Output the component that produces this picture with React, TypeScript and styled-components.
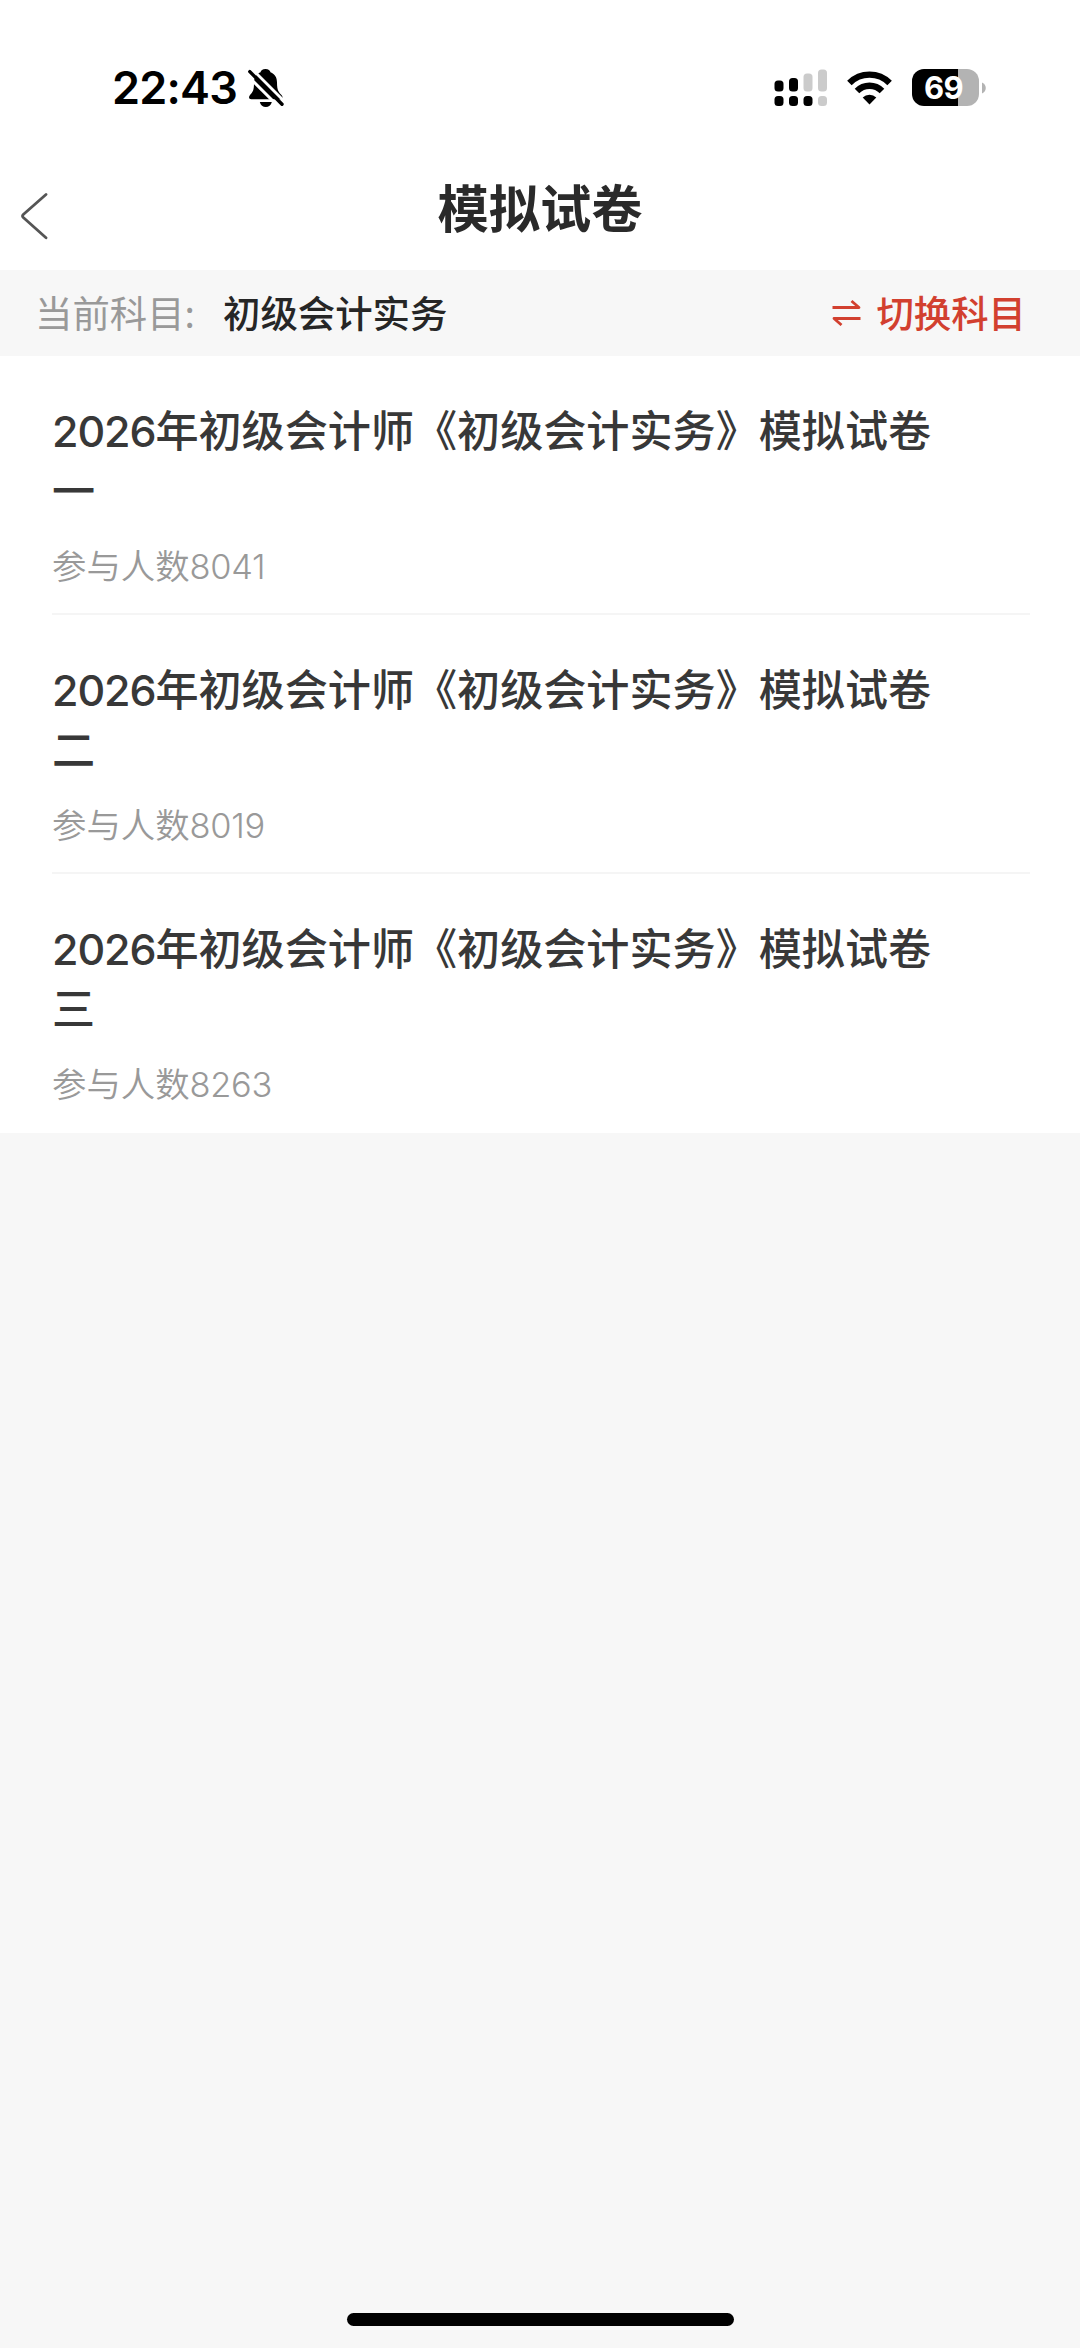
import React from "react";
import styled, { createGlobalStyle } from "styled-components";

const GlobalStyle = createGlobalStyle`
  * { box-sizing: border-box; }
  body { margin: 0; background: #f7f7f7; }
`;

const Screen = styled.div`
  width: 1080px;
  height: 2348px;
  display: flex;
  flex-direction: column;
  background: #f7f7f7;
  font-family: "Noto Sans CJK SC", sans-serif;
  overflow: hidden;
`;

const StatusBar = styled.header`
  height: 146px;
  padding: 29px 94px 0 112px;
  display: flex;
  align-items: center;
  justify-content: space-between;
  background: #fff;
`;

const StatusGroup = styled.div<{ $gap: number }>`
  display: flex;
  align-items: center;
  gap: ${(p) => p.$gap}px;
`;

const Clock = styled.span`
  font-family: Inter, sans-serif;
  font-size: 45px;
  line-height: 54px;
  font-weight: 600;
  width: 125px;
  letter-spacing: -0.8px;
  white-space: nowrap;
  color: #000;
`;

const Battery = styled.div`
  display: flex;
  align-items: center;
  gap: 3px;
`;

const BatteryBody = styled.div`
  width: 67px;
  height: 37px;
  padding-right: 4px;
  border-radius: 12px;
  display: flex;
  align-items: center;
  justify-content: center;
  background: linear-gradient(to right, #000 69%, #b3b3b3 69%);
  color: #fff;
  font: 700 31px/37px Inter, sans-serif;
  letter-spacing: -0.6px;
`;

const TitleBar = styled.div`
  height: 124px;
  padding: 0 20px 0;
  display: grid;
  grid-template-columns: 80px 1fr 80px;
  background: #fff;
`;

const BackButton = styled.button`
  border: 0;
  padding: 46px 0 0;
  background: none;
  display: flex;
  align-items: flex-start;
`;

const PageTitle = styled.h1`
  margin: 0;
  padding-top: 22px;
  text-align: center;
  font-size: 51.3px;
  line-height: 76px;
  font-weight: 700;
  color: #2a2a2a;
`;

const SubjectBar = styled.div`
  height: 86px;
  padding: 0 54px 3px 35px;
  display: flex;
  align-items: center;
  font-size: 37.4px;
  line-height: 56px;
  white-space: nowrap;
`;

const SubjectLabel = styled.span`
  width: 188px;
  color: #999;
`;

const SubjectName = styled.span`
  flex: 1;
  font-weight: 500;
  color: #262626;
`;

const SwitchButton = styled.button`
  border: 0;
  padding: 0;
  background: none;
  display: flex;
  align-items: center;
  gap: 15px;
  font: inherit;
  font-weight: 500;
  color: #d2402f;
`;

const PaperList = styled.main`
  display: flex;
  flex-direction: column;
  background: #fff;
`;

const PaperItem = styled.article`
  height: 259px;
  margin: 0 50px 0 52px;
  padding-top: 42px;
  border-bottom: 2px solid #f5f5f5;
  &:last-child { border-bottom-color: transparent; }
`;

const PaperTitle = styled.h2`
  margin: 0;
  width: 900px;
  font-size: 43.1px;
  line-height: 60px;
  font-weight: 500;
  color: #383838;
`;

const Year = styled.span`
  font-family: Inter, sans-serif;
  font-size: 43px;
  line-height: 1;
  letter-spacing: -1.1px;
`;

const Participants = styled.p`
  margin: 21px 0 0;
  font-size: 34.4px;
  line-height: 50px;
  font-weight: 350;
  color: #999;
`;

const Count = styled.span`
  font-family: Inter, sans-serif;
  font-size: 34.4px;
  line-height: 1;
  letter-spacing: -0.3px;
`;

const HomeArea = styled.footer`
  margin-top: auto;
  padding-bottom: 22px;
  display: flex;
  justify-content: center;
`;

const HomeIndicator = styled.div`
  width: 387px;
  height: 13px;
  border-radius: 7px;
  background: #000;
`;

const BellOff = () => (
  <svg width="36" height="40" viewBox="0 0 36 40">
    <path d="M17.500 1c-3 0-4.600 1.600-5 3.300C8.200 6 6 9.800 6 14.500c0 8-1.200 9.500-4 12.500-1.600 1.900-1.200 4.300 1.300 4.300h29c2.600 0 2.900-2.400 1.200-4.300-2.800-3-4.500-4.500-4.500-12.500 0-4.700-2-8.500-6.500-10.200C22.100 2.600 20.500 1 17.500 1z" fill="#000" />
    <path d="M11.800 34h12c-.8 3.300-3.100 5-6 5s-5.200-1.700-6-5z" fill="#000" />
    <path d="M-1.700 6.400L33 41" stroke="#fff" strokeWidth="3" />
    <path d="M4 1L37 34" stroke="#fff" strokeWidth="3" />
    <path d="M1.800 3.600L34 36.300" stroke="#000" strokeWidth="3.400" strokeLinecap="round" />
  </svg>
);

const Signal = () => (
  <svg width="53" height="38" viewBox="0 0 53 38">
    <g fill="#000">
      <rect x="0.500" y="11.500" width="9" height="11" rx="3.500" />
      <rect x="15" y="9" width="9" height="13.500" rx="3.500" />
      <rect x="0.500" y="27" width="9" height="10" rx="3.500" />
      <rect x="15" y="27" width="9" height="10" rx="3.500" />
      <rect x="29.500" y="27" width="9" height="10" rx="3.500" />
    </g>
    <g fill="#cbcbcb">
      <rect x="29.500" y="4.500" width="9" height="18" rx="3.500" />
      <rect x="44" y="0.500" width="9" height="22" rx="3.500" />
      <rect x="44" y="27" width="9" height="10" rx="3.500" />
    </g>
  </svg>
);

const Wifi = () => (
  <svg width="45" height="34" viewBox="0 0 45 34">
    <g fill="none" stroke="#000" strokeWidth="6.400">
      <path d="M2.400 11.900a28.500 28.500 0 0 1 40.200 0" />
      <path d="M10 19.900a17.600 17.600 0 0 1 25 0" />
    </g>
    <path d="M22.500 33.500l-6.800-6.900a9.600 9.600 0 0 1 13.600 0z" fill="#000" />
  </svg>
);

const BatteryTip = () => (
  <svg width="4" height="12" viewBox="0 0 4 12">
    <path d="M0 0.500C5 2.500 5 9.500 0 11.500z" fill="#b3b3b3" />
  </svg>
);

const BackIcon = () => (
  <svg width="28" height="48" viewBox="0 0 28 48">
    <path d="M26 2.500L3.300 22.500q-1.500 1.500 0 3L26 45.800" fill="none" stroke="#555" strokeWidth="2.800" strokeLinecap="round" />
  </svg>
);

const SwapIcon = () => (
  <svg width="29" height="28" viewBox="0 0 29 28">
    <path d="M0.500 9.500H27L19.500 3M28.500 20.500H2L9.500 27" fill="none" stroke="#d2402f" strokeWidth="2.800" strokeLinejoin="round" />
  </svg>
);

const papers = [
  { no: "一", count: 8041 },
  { no: "二", count: 8019 },
  { no: "三", count: 8263 },
];

export default function App() {
  return (
    <Screen>
      <GlobalStyle />
      <StatusBar>
        <StatusGroup $gap={11}>
          <Clock>22:43</Clock>
          <BellOff />
        </StatusGroup>
        <StatusGroup $gap={20}>
          <Signal />
          <Wifi />
          <Battery>
            <BatteryBody>69</BatteryBody>
            <BatteryTip />
          </Battery>
        </StatusGroup>
      </StatusBar>
      <TitleBar>
        <BackButton aria-label="返回"><BackIcon /></BackButton>
        <PageTitle>模拟试卷</PageTitle>
      </TitleBar>
      <SubjectBar>
        <SubjectLabel>当前科目:</SubjectLabel>
        <SubjectName>初级会计实务</SubjectName>
        <SwitchButton><SwapIcon />切换科目</SwitchButton>
      </SubjectBar>
      <PaperList>
        {papers.map((p) => (
          <PaperItem key={p.no}>
            <PaperTitle><Year>2026</Year>年初级会计师《初级会计实务》模拟试卷{p.no}</PaperTitle>
            <Participants>参与人数<Count>{p.count}</Count></Participants>
          </PaperItem>
        ))}
      </PaperList>
      <HomeArea><HomeIndicator /></HomeArea>
    </Screen>
  );
}
